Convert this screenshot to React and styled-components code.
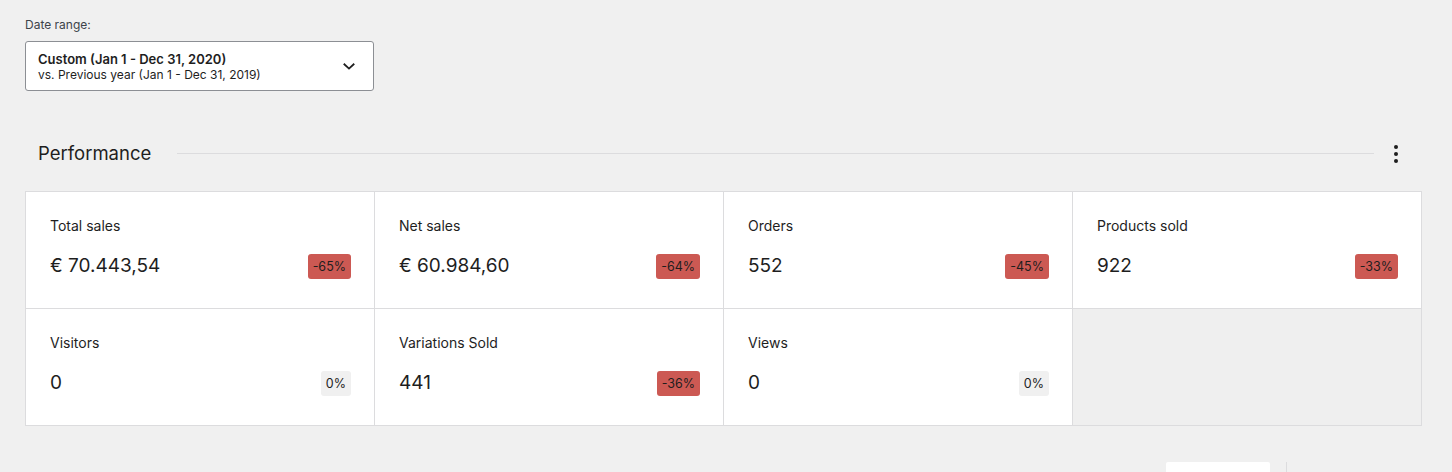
import React from "react";
import styled, { createGlobalStyle } from "styled-components";

const GlobalStyle = createGlobalStyle`
  body {
    margin: 0;
    background: #f0f0f0;
    font-family: Inter, "Noto Sans", "Liberation Sans", sans-serif;
    color: #1e1e1e;
  }
`;

const stats = [
  { label: "Total sales", value: "€ 70.443,54", delta: "-65%" },
  { label: "Net sales", value: "€ 60.984,60", delta: "-64%" },
  { label: "Orders", value: "552", delta: "-45%" },
  { label: "Products sold", value: "922", delta: "-33%" },
  { label: "Visitors", value: "0", delta: "0%", neutral: true },
  { label: "Variations Sold", value: "441", delta: "-36%" },
  { label: "Views", value: "0", delta: "0%", neutral: true },
];

function App() {
  return (
    <Page>
      <GlobalStyle />
      <Filter>
        <FilterLabel>Date range:</FilterLabel>
        <Select>
          <SelectText>
            <strong>Custom (Jan 1 - Dec 31, 2020)</strong>
            <span>vs. Previous year (Jan 1 - Dec 31, 2019)</span>
          </SelectText>
          <svg width="18" height="18" viewBox="0 0 24 24">
            <path
              d="M5 9l7 6.5L19 9"
              fill="none"
              stroke="#1e1e1e"
              strokeWidth="2.4"
            />
          </svg>
        </Select>
      </Filter>

      <SectionHeader>
        <Title>Performance</Title>
        <Rule />
        <MoreButton>
          <svg width="4" height="18" viewBox="0 0 4 18">
            <circle cx="2" cy="2" r="2" fill="#1e1e1e" />
            <circle cx="2" cy="9" r="2" fill="#1e1e1e" />
            <circle cx="2" cy="16" r="2" fill="#1e1e1e" />
          </svg>
        </MoreButton>
      </SectionHeader>

      <Grid>
        {stats.map((s) => (
          <Cell key={s.label}>
            <Label>{s.label}</Label>
            <ValueRow>
              <Value>{s.value}</Value>
              <Delta $neutral={s.neutral}>{s.delta}</Delta>
            </ValueRow>
          </Cell>
        ))}
        <EmptyCell />
      </Grid>

      <Footer>
        <FooterTab />
        <FooterDivider />
      </Footer>
    </Page>
  );
}

export default App;

const Page = styled.div`
  padding: 16px 31px 0 25px;
  height: 472px;
  box-sizing: border-box;
  overflow: hidden;
`;

const Filter = styled.div`
  display: flex;
  flex-direction: column;
`;

const FilterLabel = styled.div`
  font-size: 12px;
  line-height: 18px;
  color: #3c434a;
  margin-bottom: 7px;
`;

const Select = styled.div`
  width: 349px;
  height: 50px;
  box-sizing: border-box;
  display: flex;
  align-items: center;
  justify-content: space-between;
  padding: 0 15px 0 12px;
  background: #fff;
  border: 1px solid #8c8f94;
  border-radius: 3px;
`;

const SelectText = styled.div`
  display: flex;
  flex-direction: column;
  line-height: 16px;
  padding-top: 1px;

  strong {
    font-size: 13px;
    font-weight: 600;
  }

  span {
    font-size: 12px;
  }
`;

const SectionHeader = styled.div`
  display: flex;
  align-items: center;
  margin-top: 48px;
  padding: 0 23px 0 13px;
  height: 28px;
`;

const Title = styled.h2`
  margin: 0;
  font-size: 18.5px;
  font-weight: 400;
  color: #1e1e1e;
`;

const Rule = styled.div`
  flex: 1;
  height: 1px;
  background: #dcdcde;
  margin: 0 20px 0 26px;
`;

const MoreButton = styled.div`
  display: flex;
  align-items: center;
  padding-top: 1px;
`;

const Grid = styled.div`
  margin-top: 24px;
  display: grid;
  grid-template-columns: repeat(4, 1fr);
  width: 1396px;
  border-top: 1px solid #dcdcde;
  border-left: 1px solid #dcdcde;
`;

const Cell = styled.div`
  background: #fff;
  border-right: 1px solid #dcdcde;
  border-bottom: 1px solid #dcdcde;
  padding: 24px 23px 24px 24px;
  height: 117px;
  box-sizing: border-box;
`;

const EmptyCell = styled.div`
  background: #efefef;
  border-right: 1px solid #dcdcde;
  border-bottom: 1px solid #dcdcde;
`;

const Label = styled.div`
  font-size: 14px;
  line-height: 20px;
  color: #1e1e1e;
`;

const ValueRow = styled.div`
  display: flex;
  align-items: center;
  justify-content: space-between;
  margin-top: 16px;
`;

const Value = styled.div`
  font-size: 19px;
  line-height: 28px;
  color: #1e1e1e;
`;

const Delta = styled.span`
  font-size: 12.5px;
  line-height: 16px;
  padding: 5px 5px 4px;
  border-radius: 3px;
  color: #1e1e1e;
  background: ${(p) => (p.$neutral ? "#f0f0f0" : "#cc5953")};
`;

const Footer = styled.div`
  display: flex;
  justify-content: flex-end;
  align-items: flex-start;
  margin-top: 36px;
  padding-right: 134px;
  gap: 16px;
`;

const FooterTab = styled.div`
  width: 104px;
  height: 20px;
  background: #fff;
  border-radius: 2px 2px 0 0;
`;

const FooterDivider = styled.div`
  width: 1px;
  height: 20px;
  background: #dcdcde;
`;
